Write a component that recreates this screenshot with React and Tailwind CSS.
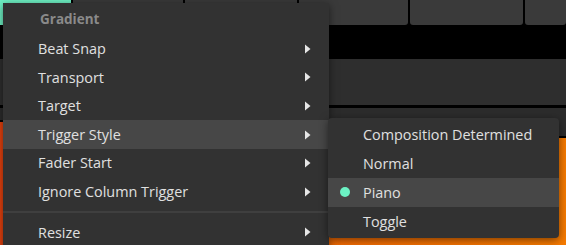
import React from "react";

const mainItems = [
  { label: "Beat Snap" },
  { label: "Transport" },
  { label: "Target" },
  { label: "Trigger Style", active: true },
  { label: "Fader Start" },
  { label: "Ignore Column Trigger" },
];

const subItems = [
  { label: "Composition Determined" },
  { label: "Normal" },
  { label: "Piano", checked: true },
  { label: "Toggle" },
];

function Arrow() {
  return (
    <svg width="6" height="10" viewBox="0 0 6 10" className="shrink-0">
      <path d="M0 0.5 L5.5 5 L0 9.5 Z" fill="#e6e6e6" />
    </svg>
  );
}

function MenuRow({ label, active }) {
  return (
    <div
      className={
        "flex items-center h-[28.6px] pl-[35px] pr-[18px] " +
        (active ? "bg-[#474747]" : "")
      }
    >
      <span className="flex-1 text-[14.4px] text-[#e0e0e0]">{label}</span>
      <Arrow />
    </div>
  );
}

export default function App() {
  return (
    <div
      className="relative w-[566px] h-[245px] overflow-hidden bg-[#2c2c2c]"
      style={{ fontFamily: '"Open Sans", "Noto Sans", sans-serif' }}
    >
      {/* background: clip tiles, black lane, track rows */}
      <div className="flex h-[25px] bg-black gap-[2px]">
        <div className="w-[71px] bg-[#6ef0c3]" />
        <div className="w-[110px] bg-[#3a3a3a] rounded-b-[3px]" />
        <div className="w-[112px] bg-[#3a3a3a] rounded-b-[3px]" />
        <div className="w-[109px] bg-[#3a3a3a] rounded-b-[3px]" />
        <div className="w-[113px] bg-[#3a3a3a] rounded-b-[3px]" />
        <div className="flex-1 bg-[#3a3a3a] rounded-b-[3px]" />
      </div>
      <div className="h-[34px] bg-black" />
      <div className="h-[46px] bg-[#2e2e2e]" />
      <div className="h-[3px] bg-black" />
      <div className="flex h-[137px]">
        <div className="flex flex-col w-[10px]">
          <div className="h-[12px] bg-[#2c2c2c]" />
          <div className="h-[2px] bg-black" />
          <div className="flex-1 bg-[#e4410e]" />
        </div>
        <div className="flex-1 flex flex-col">
          <div className="h-[28px] bg-[#2c2c2c]" />
          <div className="h-[2px] bg-black" />
          <div className="flex-1 bg-gradient-to-r from-[#ea5208] to-[#f57a00]" />
        </div>
      </div>

      {/* main context menu */}
      <div className="absolute left-[3px] top-[3px] w-[326px] h-[260px] bg-[#323232] shadow-[0_2px_8px_rgba(0,0,0,0.5)]">
        <div className="h-[31.6px] flex items-center pl-[37px] text-[13.5px] font-bold text-[#8a8a8a]">
          Gradient
        </div>
        {mainItems.map((it) => (
          <MenuRow key={it.label} label={it.label} active={it.active} />
        ))}
        <div className="h-[12px] flex flex-col justify-center">
          <div className="h-[2px] bg-[#3f3f3f]" />
        </div>
        <MenuRow label="Resize" />
      </div>

      {/* submenu */}
      <div className="absolute left-[328px] top-[118px] w-[231px] py-[2px] bg-[#323232] rounded-[4px] shadow-[0_2px_8px_rgba(0,0,0,0.5)]">
        {subItems.map((it) => (
          <div
            key={it.label}
            className={
              "relative flex items-center h-[29px] pl-[35px] " +
              (it.checked ? "bg-[#474747]" : "")
            }
          >
            {it.checked && (
              <span className="absolute left-[12px] top-[9px] w-[10px] h-[10px] rounded-full bg-[#6cf2c4]" />
            )}
            <span className="text-[14.4px] text-[#e0e0e0]">{it.label}</span>
          </div>
        ))}
      </div>
    </div>
  );
}
